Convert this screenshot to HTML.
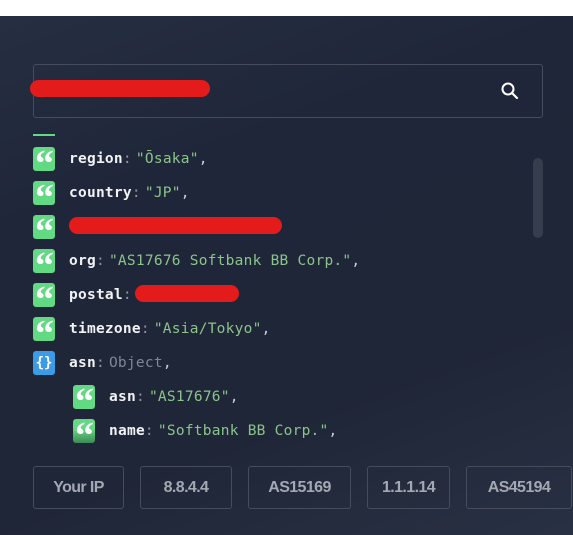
<!DOCTYPE html>
<html><head><meta charset="utf-8"><style>
*{margin:0;padding:0;box-sizing:border-box}
body{width:573px;height:535px;background:#fff;position:relative;overflow:hidden;font-family:"DejaVu Sans Mono","Liberation Mono",monospace}
.bg{position:absolute;left:0;top:16px;width:573px;height:519px;background:linear-gradient(160deg,#262e42 0%,#1f2639 30%,#1f2638 70%,#283143 100%)}
.search{position:absolute;left:33px;top:64px;width:510px;height:54px;border:1px solid #454c5c;border-radius:3px}
.red{position:absolute;background:#e31b1b;border-radius:9px}
.list{position:absolute;left:0;top:128px;width:533px;height:325px;overflow:hidden}
.row{position:absolute;height:24px;display:flex;align-items:center;font-size:14.5px;letter-spacing:0.25px;padding-top:1px}
.ic{width:22px;height:24px;border-radius:3px;background:#62d983;color:#fff;margin-right:14px;position:relative;overflow:hidden}
.ic span{position:absolute;left:2px;top:-2px;font:bold 38px/38px "Liberation Serif",serif;letter-spacing:-3px}
.ic.b{background:#3c9be6;font:bold 14px "DejaVu Sans Mono",monospace;letter-spacing:0;display:flex;align-items:center;justify-content:center}
.k{color:#f0f2f4;font-weight:bold}
.c{color:#8d95a3;margin-right:4px}
.s{color:#8bc48a}
.o{color:#7e8797}
.p{color:#c9ced6}
.sb{position:absolute;left:533px;top:158px;width:10px;height:80px;background:#363d4d;border-radius:5px}
.btn{position:absolute;top:466px;height:43px;border:1px solid #454c5c;border-radius:3px;color:#a3a8b2;font:bold 16px "Liberation Sans",sans-serif;display:flex;align-items:center;justify-content:center;letter-spacing:-0.6px}
</style></head><body>
<div class="bg"></div>
<div class="search"></div>
<div class="red" style="left:30px;top:80px;width:180px;height:17px"></div>
<svg style="position:absolute;left:500px;top:81px" width="20" height="20" viewBox="0 0 20 20"><circle cx="8" cy="8" r="5.5" fill="none" stroke="#fff" stroke-width="2"/><line x1="12" y1="12" x2="17" y2="17" stroke="#fff" stroke-width="2.2" stroke-linecap="round"/></svg>
<div class="list">
<div style="position:absolute;left:33px;top:6px;width:22px;height:2px;background:#62d983"></div>
<div class="row" style="left:33px;top:18px"><div class="ic"><span>“</span></div><span class="k">region</span><span class="c">:</span><span class="s">"Ōsaka"</span><span class="p">,</span></div>
<div class="row" style="left:33px;top:52px"><div class="ic"><span>“</span></div><span class="k">country</span><span class="c">:</span><span class="s">"JP"</span><span class="p">,</span></div>
<div class="row" style="left:33px;top:86px"><div class="ic"><span>“</span></div></div>
<div class="row" style="left:33px;top:120px"><div class="ic"><span>“</span></div><span class="k">org</span><span class="c">:</span><span class="s">"AS17676 Softbank BB Corp."</span><span class="p">,</span></div>
<div class="row" style="left:33px;top:154px"><div class="ic"><span>“</span></div><span class="k">postal</span><span class="c">:</span></div>
<div class="row" style="left:33px;top:188px"><div class="ic"><span>“</span></div><span class="k">timezone</span><span class="c">:</span><span class="s">"Asia/Tokyo"</span><span class="p">,</span></div>
<div class="row" style="left:33px;top:222px"><div class="ic b">{}</div><span class="k">asn</span><span class="c">:</span><span class="o">Object</span><span class="p">,</span></div>
<div class="row" style="left:73px;top:256px"><div class="ic"><span>“</span></div><span class="k">asn</span><span class="c">:</span><span class="s">"AS17676"</span><span class="p">,</span></div>
<div class="row" style="left:73px;top:290px"><div class="ic" style="background:linear-gradient(#62d983 40%,#3f8a55)"><span>“</span></div><span class="k">name</span><span class="c">:</span><span class="s">"Softbank BB Corp."</span><span class="p">,</span></div>
</div>
<div class="red" style="left:69px;top:217px;width:213px;height:17px"></div>
<div class="red" style="left:135px;top:285px;width:104px;height:17px"></div>
<div class="sb"></div>
<div class="btn" style="left:33px;width:91px">Your IP</div>
<div class="btn" style="left:140px;width:92px">8.8.4.4</div>
<div class="btn" style="left:248px;width:103px">AS15169</div>
<div class="btn" style="left:367px;width:83px">1.1.1.14</div>
<div class="btn" style="left:466px;width:106px">AS45194</div>
</body></html>
